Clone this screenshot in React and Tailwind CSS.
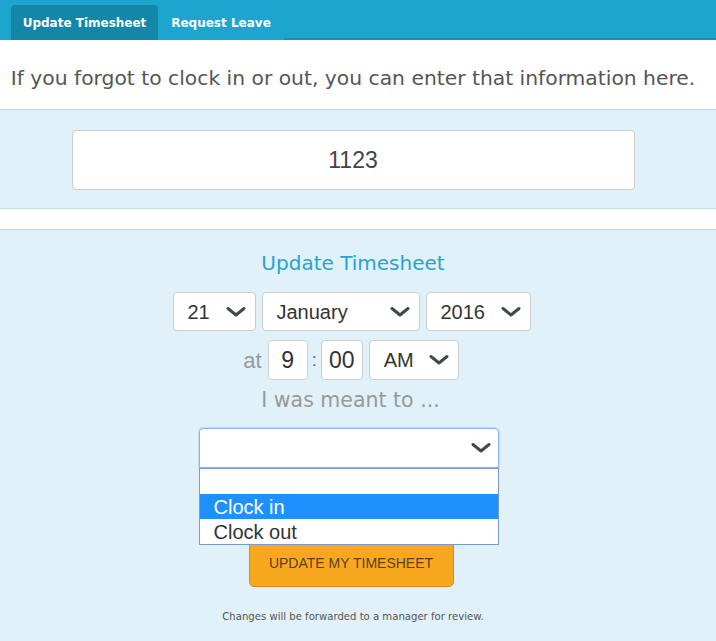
import React from "react";

const Chevron = () => (
  <svg width="20" height="12" viewBox="0 0 20 12" className="shrink-0">
    <path d="M2 2.5 L10 9 L18 2.5" fill="none" stroke="#3f4b4b" strokeWidth="3" strokeLinecap="round" strokeLinejoin="round" />
  </svg>
);

const Select = ({ value, className }) => (
  <div
    className={`h-[39px] bg-white border border-[#cccccc] rounded-[4px] flex items-center justify-between pl-[14px] pr-[9px] text-[20px] text-[#333] ${className}`}
    style={{ fontFamily: '"Liberation Sans", Arial, sans-serif' }}
  >
    <span>{value}</span>
    <Chevron />
  </div>
);

export default function App() {
  return (
    <div className="w-[716px] h-[641px] overflow-hidden bg-[#e0f1f9]" style={{ fontFamily: '"DejaVu Sans", Verdana, sans-serif' }}>
      {/* tabs */}
      <div className="h-[40px] bg-[#1ea5cf] flex items-end pl-[11px]">
        <div className="h-[35px] w-[147px] bg-[#1486a8] rounded-t-[4px] flex items-center justify-center text-white text-[12px] font-bold">
          Update Timesheet
        </div>
        <div className="h-[35px] w-[126px] flex items-center justify-center text-white text-[12px] font-bold">
          Request Leave
        </div>
        <div className="flex-1 h-[2px] bg-[#1a8fb6]" />
      </div>
      {/* intro */}
      <div className="h-[70px] bg-white flex items-center justify-center pt-[7px] pr-[10px] border-b border-[#bcdff0] text-[20.3px] text-[#555] whitespace-nowrap">
        If you forgot to clock in or out, you can enter that information here.
      </div>
      {/* employee number */}
      <div className="h-[99px] flex items-center justify-center pr-[10px] pt-[2px] border-b border-[#bcdff0]">
        <div
          className="w-[563px] h-[60px] bg-white border border-[#cccccc] rounded-[4px] flex items-center justify-center text-[23px] text-[#444]"
          style={{ fontFamily: '"Liberation Sans", Arial, sans-serif' }}
        >
          1123
        </div>
      </div>
      <div className="h-[21px] bg-white border-b border-[#bcdff0]" />
      {/* form */}
      <div className="flex flex-col items-center pr-[10px]">
        <div className="mt-[20px] text-[20px] text-[#2aa3cf] leading-[26px]">Update Timesheet</div>
        <div className="mt-[16px] flex gap-[6px] mr-[3px]">
          <Select value="21" className="w-[83px]" />
          <Select value="January" className="w-[158px]" />
          <Select value="2016" className="w-[105px]" />
        </div>
        <div className="mt-[9px] flex items-center text-[20px] mr-[4px]" style={{ fontFamily: '"Liberation Sans", Arial, sans-serif' }}>
          <span className="text-[#999] mr-[6px] text-[22px]">at</span>
          <div className="w-[40px] h-[40px] bg-white border border-[#cccccc] rounded-[4px] flex items-center justify-center text-[#333] text-[23px]">9</div>
          <span className="text-[#666] mx-[4px] text-[18px]">:</span>
          <div className="w-[42px] h-[40px] bg-white border border-[#cccccc] rounded-[4px] flex items-center justify-center text-[#333] text-[23px]">00</div>
          <Select value="AM" className="w-[90px] ml-[6px] h-[40px]" />
        </div>
        <div className="mt-[8px] text-[20.5px] text-[#999] leading-[24px] mr-[5px]">I was meant to ...</div>
        <div className="relative mt-[16px] w-[300px] mr-[9px]">
          <div className="h-[40px] bg-white border border-[#8ab4ef] rounded-t-[4px] flex items-center justify-end pr-[7px] shadow-[0_0_0_1px_#c8dcf8]">
            <Chevron />
          </div>
          <div className="absolute left-0 top-[40px] w-[300px] bg-white border border-[#7a9cd3] z-10 text-[20px] text-[#333]" style={{ fontFamily: '"Liberation Sans", Arial, sans-serif' }}>
            <div className="h-[25px]" />
            <div className="h-[25px] bg-[#1e90ff] text-white pl-[14px] flex items-center">Clock in</div>
            <div className="h-[25px] pl-[14px] flex items-center">Clock out</div>
          </div>
        </div>
        <div className="flex justify-center mt-[71px] mr-[4px]">
          <div
            className="w-[205px] h-[48px] bg-[#f8a81e] border border-[#d98f12] rounded-[5px] flex items-center justify-center text-[14px] text-[#5b3f1f]"
            style={{ fontFamily: '"Liberation Sans", Arial, sans-serif' }}
          >
            UPDATE MY TIMESHEET
          </div>
        </div>
        <div className="mt-[22px] text-[10.1px] text-[#555]">Changes will be forwarded to a manager for review.</div>
      </div>
    </div>
  );
}
